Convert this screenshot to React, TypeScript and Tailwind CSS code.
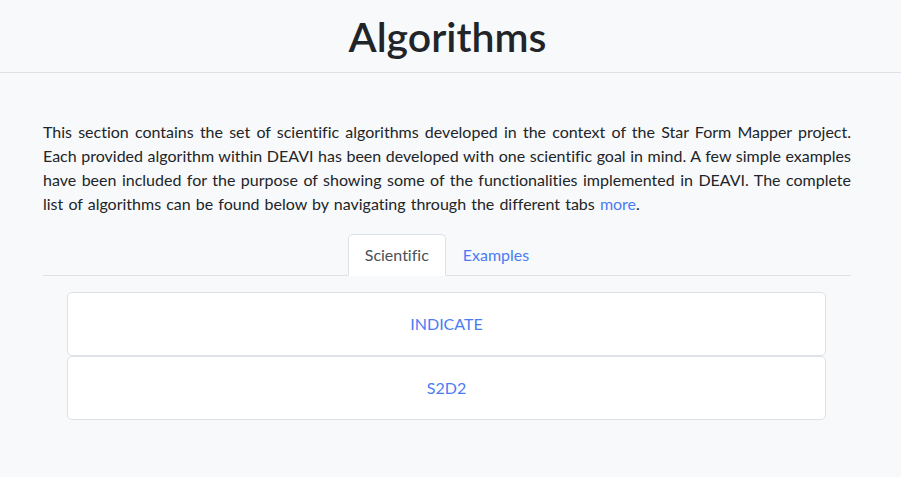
import React from "react";

const lines = [
  "This section contains the set of scientific algorithms developed in the context of the Star Form Mapper project.",
  "Each provided algorithm within DEAVI has been developed with one scientific goal in mind. A few simple examples",
  "have been included for the purpose of showing some of the functionalities implemented in DEAVI. The complete",
];

const algorithms = ["INDICATE", "S2D2"];

export default function App() {
  return (
    <div className="min-h-[477px] bg-[#f8f9fa] text-[#212529] font-['Lato','Noto_Sans',sans-serif] [font-variant-ligatures:none]">
      <header className="flex h-[73px] items-center justify-center border-b border-[#dee2e6]">
        <h1 className="pr-[6px] text-[41px] font-semibold leading-none">Algorithms</h1>
      </header>

      <main className="pl-[43px] pr-[50px] pt-[47px]">
        <p className="text-[16px] leading-6">
          {lines.map((line) => (
            <span key={line} className="block text-justify [text-align-last:justify]">
              {line}
            </span>
          ))}
          <span className="block [word-spacing:1px]">
            list of algorithms can be found below by navigating through the different tabs{" "}
            <a href="#" className="text-[#4a7cf4]">
              more
            </a>
            .
          </span>
        </p>

        <nav className="mt-[18px] flex justify-center border-b border-[#dee2e6]">
          <button className="-mb-px h-[42px] rounded-t-[5px] border border-[#dee2e6] border-b-white bg-white px-4 text-[16px] text-[#495057]">
            Scientific
          </button>
          <button className="-mb-px h-[42px] border border-transparent px-4 text-[16px] text-[#4a7cf4]">
            Examples
          </button>
        </nav>

        <div className="ml-[24px] mr-[25px] mt-4 flex flex-col">
          {algorithms.map((name) => (
            <a
              key={name}
              href="#"
              className="flex h-[64px] items-center justify-center rounded-[5px] border border-[#dee2e6] bg-white text-[16px] text-[#4a7cf4]"
            >
              {name}
            </a>
          ))}
        </div>
      </main>
    </div>
  );
}
